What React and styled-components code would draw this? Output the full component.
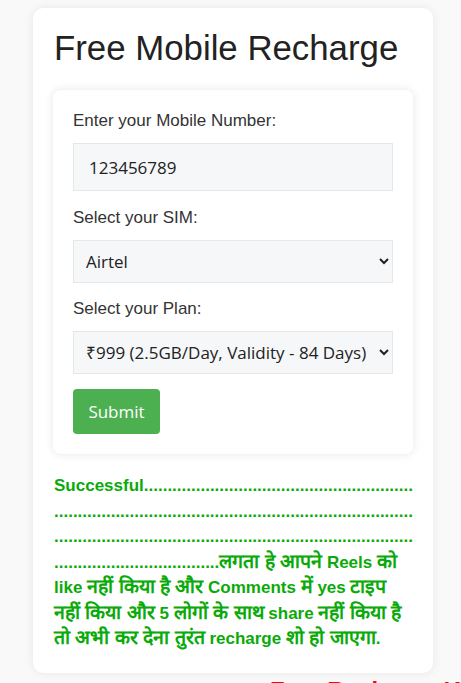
import React, { useState } from "react";
import styled, { createGlobalStyle } from "styled-components";

const GlobalStyle = createGlobalStyle`
  html, body {
    margin: 0;
    padding: 0;
    background-color: #f9f9f9;
    font-family: "Liberation Sans", Arial, sans-serif;
    overflow: hidden;
  }
`;

const plans = [
  "₹999 (2.5GB/Day, Validity - 84 Days)",
  "₹719 (1.5GB/Day, Validity - 84 Days)",
  "₹299 (1.5GB/Day, Validity - 28 Days)",
];

const sims = ["Airtel", "Jio", "Vi", "BSNL"];

const dots = ".".repeat(244);

const lines = [
  "Successful" + dots + "लगता हे आपने Reels को",
  "like नहीं किया है और Comments में yes टाइप",
  "नहीं किया और 5 लोगों के साथ share नहीं किया है",
  "तो अभी कर देना तुरंत recharge शो हो जाएगा.",
];

// Devanagari runs get their own size, Latin stays as is
const renderMixed = (text) =>
  text
    .split(/([\u0900-\u097F]+(?: [\u0900-\u097F]+)*)/)
    .map((part, i) =>
      /[\u0900-\u097F]/.test(part) ? <Hi key={i}>{part}</Hi> : part
    );

function App() {
  const [number, setNumber] = useState("123456789");
  const [sim, setSim] = useState(sims[0]);
  const [plan, setPlan] = useState(plans[0]);

  return (
    <Page>
      <GlobalStyle />
      <Container>
        <Title>Free Mobile Recharge</Title>
        <Form onSubmit={(e) => e.preventDefault()}>
          <Label>Enter your Mobile Number:</Label>
          <Input
            type="text"
            value={number}
            onChange={(e) => setNumber(e.target.value)}
          />
          <Label>Select your SIM:</Label>
          <Select value={sim} onChange={(e) => setSim(e.target.value)}>
            {sims.map((s) => (
              <option key={s}>{s}</option>
            ))}
          </Select>
          <Label>Select your Plan:</Label>
          <Select
            last
            value={plan}
            onChange={(e) => setPlan(e.target.value)}
          >
            {plans.map((p) => (
              <option key={p}>{p}</option>
            ))}
          </Select>
          <Button type="submit">Submit</Button>
        </Form>
        <Message>
          {lines.map((line, i) => (
            <React.Fragment key={i}>
              {i > 0 && <br />}
              {renderMixed(line)}
            </React.Fragment>
          ))}
        </Message>
      </Container>
      <Ticker>Free Recharge Kaise Milega</Ticker>
    </Page>
  );
}

export default App;

const Page = styled.div`
  width: 428px;
  padding: 8px 0 0 33px;
`;

const Container = styled.div`
  box-sizing: border-box;
  width: 400px;
  padding: 20px 20px 21px;
  background-color: #fff;
  border-radius: 10px;
  box-shadow: 0 0 10px rgba(0, 0, 0, 0.08);
`;

const Title = styled.h1`
  margin: 0 0 22px 1px;
  font-size: 34.8px;
  font-weight: 400;
  line-height: 40px;
  color: #222;
`;

const Form = styled.form`
  display: flex;
  flex-direction: column;
  align-items: flex-start;
  padding: 22px 20px 20px;
  background-color: #fff;
  border-radius: 8px;
  box-shadow: 0 0 10px rgba(0, 0, 0, 0.1);
`;

const Label = styled.label`
  display: block;
  margin-bottom: 13px;
  font-size: 17px;
  line-height: 18px;
  color: #333;
`;

const Input = styled.input`
  box-sizing: border-box;
  width: 100%;
  height: 48px;
  margin: 0 0 18px;
  padding: 0 15px;
  border: 1px solid #e6e7e9;
  background-color: #f6f7f9;
  font-family: "Open Sans", sans-serif;
  font-size: 17px;
  color: #222;
  outline: none;
`;

const Select = styled.select`
  box-sizing: border-box;
  width: 100%;
  height: 43px;
  margin: 0 0 ${({ last }) => (last ? "15px" : "17px")};
  padding: 0 8px 0 8px;
  border: 1px solid #e6e7e9;
  border-radius: 0;
  background-color: #f6f7f9;
  font-family: "Open Sans", sans-serif;
  font-size: 17px;
  color: #222;
  outline: none;
`;

const Button = styled.button`
  width: 87px;
  height: 45px;
  padding: 0;
  border: none;
  border-radius: 4px;
  background-color: #4caf50;
  color: #fff;
  font-family: "Open Sans", sans-serif;
  font-size: 17px;
  cursor: pointer;
`;

const Message = styled.div`
  margin: 19px 0 0 1px;
  font-size: 17px;
  font-weight: 700;
  line-height: 25.5px;
  color: #0aaa0a;
  overflow-wrap: anywhere;
`;

const Hi = styled.span`
  font-size: 19.5px;
  line-height: 1;
`;

const Ticker = styled.div`
  margin-top: 4px;
  padding-left: 237px;
  overflow: hidden;
  white-space: nowrap;
  font-size: 24px;
  font-weight: 700;
  color: #ff0000;
`;
